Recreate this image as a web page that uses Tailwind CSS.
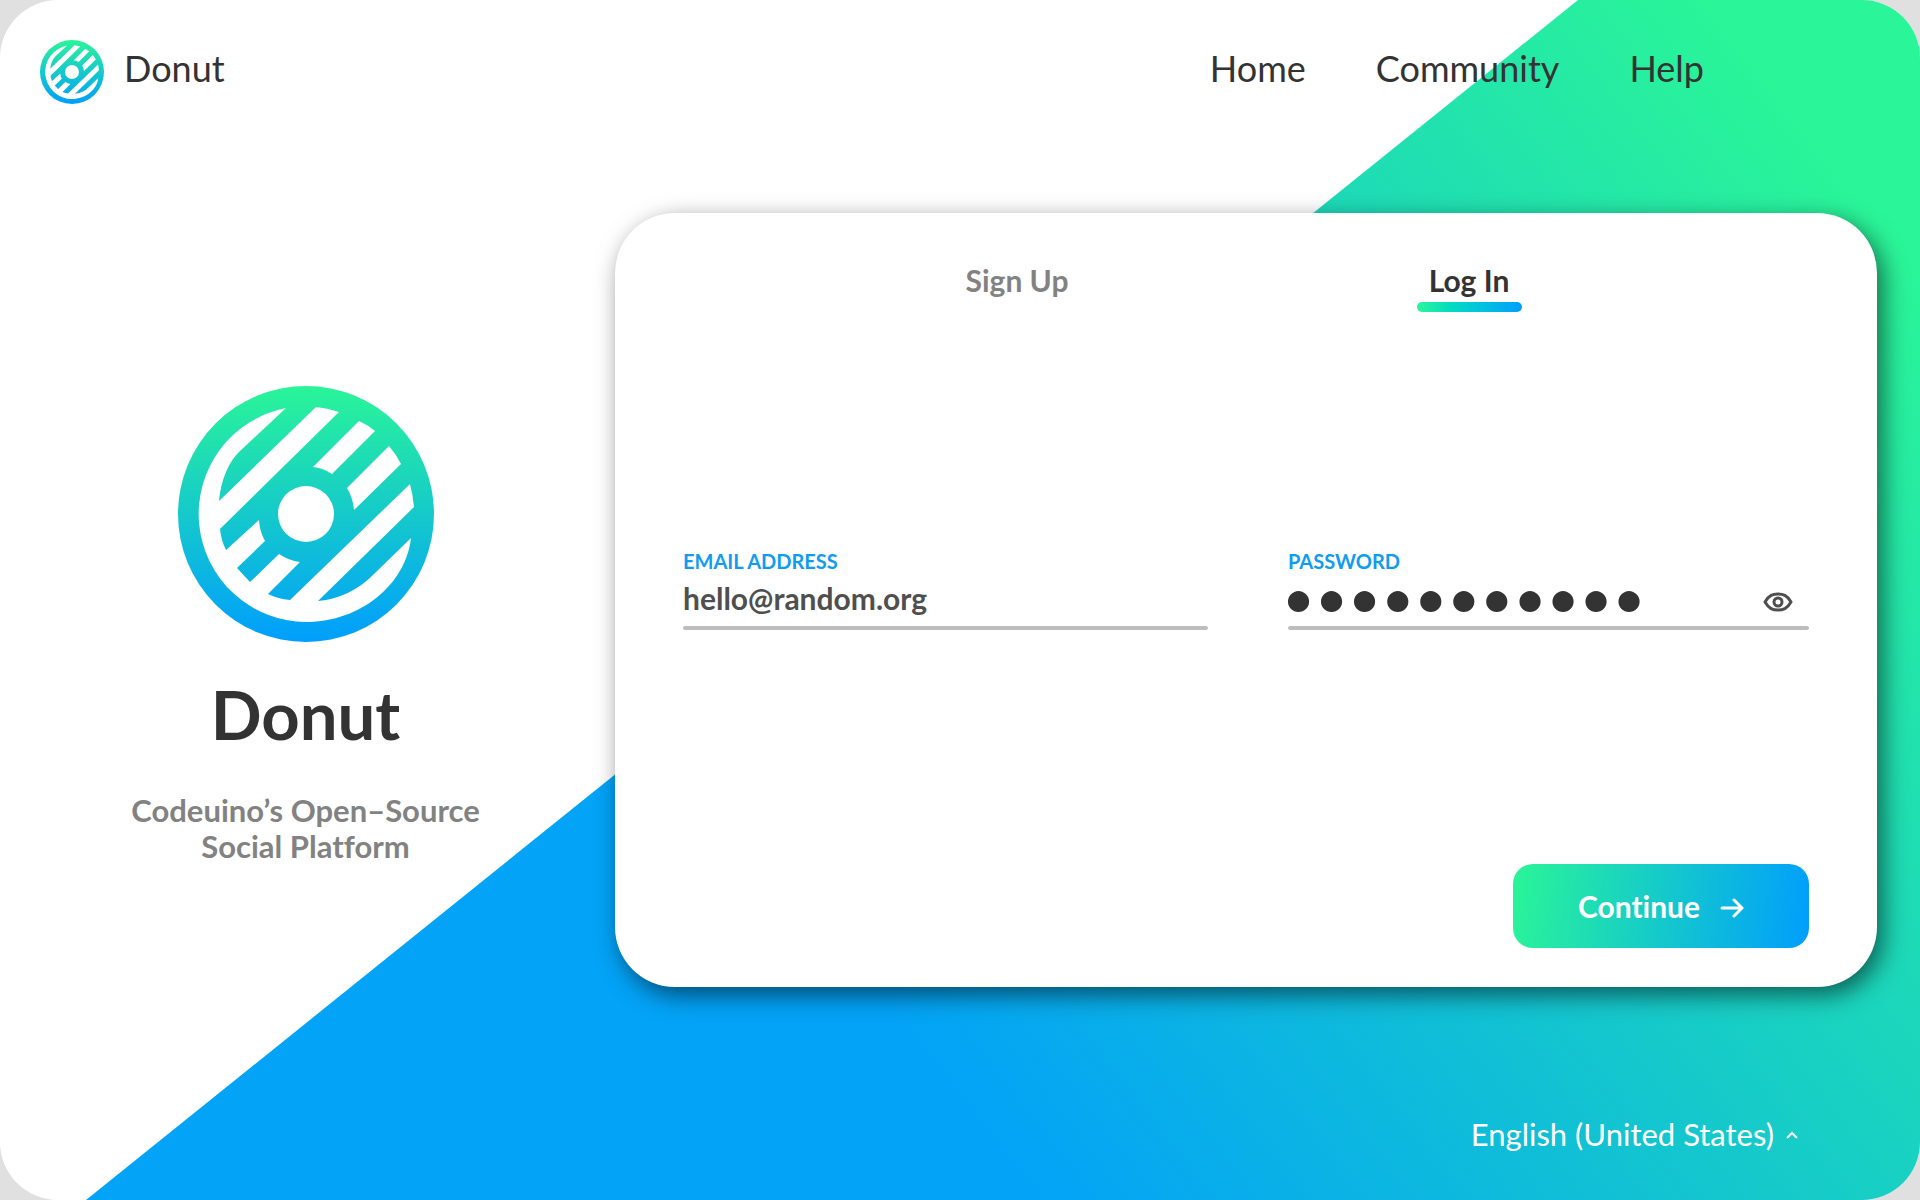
<!DOCTYPE html>
<html lang="en">
<head>
<meta charset="utf-8">
<meta name="viewport" content="width=device-width, initial-scale=1">
<title>Donut</title>
<script src="https://cdn.jsdelivr.net/npm/@tailwindcss/browser@4"></script>
</head>
<body class="min-h-screen bg-[#e0e0e0] font-['Lato',sans-serif] text-[#333333] [font-variant-ligatures:none]">
<svg class="absolute size-0" aria-hidden="true">
  <defs>
    <linearGradient id="brand" x1="0" y1="0" x2="0" y2="1">
      <stop offset="0" stop-color="#2af598"/>
      <stop offset="1" stop-color="#009efd"/>
    </linearGradient>
    <symbol id="donut-mark" viewBox="0 0 256 256">
      <circle cx="128" cy="128" r="128" fill="url(#brand)"/>
      <path fill="#fff" d="M108 22A108 108 0 0 0 128 236C183 236 228 198 233 152L196 188C180 204 162 213 140 215L236 121Q235 109 232 98L112 214Q100 213 90 208L122 176A48 48 0 0 1 101 168L72 196L59 182L87 155A48 48 0 0 1 81 134L48 164Q43 154 42 143L161 26Q149 22 138 21L41 115C43 93 51 76 61 66Z"/>
      <path fill="#fff" d="M135 81L181 35Q190 39 197 45L154 88Q145 82 135 81ZM169 102L211 60Q218 68 223 78L176 124Q175 112 169 102Z"/>
      <circle cx="128" cy="128" r="28" fill="#fff"/>
    </symbol>
  </defs>
</svg>

<div class="relative flex min-h-screen flex-col overflow-hidden rounded-[58px] bg-white">
  <svg class="absolute inset-0 size-full" viewBox="0 0 1920 1200" preserveAspectRatio="none" aria-hidden="true">
    <defs>
      <linearGradient id="slope" gradientUnits="userSpaceOnUse" x1="960" y1="1100" x2="1961" y2="326">
        <stop offset="0" stop-color="#03a3f7"/>
        <stop offset="1" stop-color="#2af598"/>
      </linearGradient>
    </defs>
    <path d="M86 1200L1578 0H1920V1200Z" fill="url(#slope)"/>
  </svg>

  <header class="relative flex items-start justify-between pt-10 pr-[216px] pl-10">
    <a href="#" class="flex items-start gap-5 text-[36px] leading-14">
      <svg class="size-16" aria-hidden="true"><use href="#donut-mark"/></svg>
      <span>Donut</span>
    </a>
    <nav class="flex gap-[70px] text-[36px] leading-14">
      <a href="#">Home</a>
      <a href="#">Community</a>
      <a href="#">Help</a>
    </nav>
  </header>

  <main class="relative mt-[109px] flex pr-[43px]">
    <section class="flex w-[615px] shrink-0 flex-col items-center pt-[173px] pr-1 text-center">
      <svg class="size-64" aria-hidden="true"><use href="#donut-mark"/></svg>
      <h1 class="mt-[30px] text-[67px] leading-[84px] font-bold">Donut</h1>
      <p class="mt-9 text-[31px] leading-9 font-bold text-[#828282]">Codeuino’s Open–Source<br>Social Platform</p>
    </section>

    <form class="flex h-[774px] flex-1 flex-col rounded-[60px] bg-white px-[68px] pb-[39px] shadow-[6px_8px_24px_rgba(0,0,0,0.55)]">
      <div class="flex justify-center gap-[347px] pt-[49px] pr-[6px] text-[30px] leading-[36px] font-bold" role="tablist">
        <button type="button" role="tab" aria-selected="false" class="flex w-[105px] justify-center whitespace-nowrap text-[#828282]">Sign Up</button>
        <button type="button" role="tab" aria-selected="true" class="flex w-[105px] flex-col items-center gap-1">
          <span>Log In</span>
          <span class="h-[10px] w-full rounded-full bg-linear-to-r from-[#2af598] to-[#009efd]"></span>
        </button>
      </div>

      <div class="mt-[237px] grid grid-cols-[525fr_521fr] gap-20">
        <div class="flex flex-col">
          <label for="email" class="text-[20px] leading-6 font-bold text-[#109cf1]">EMAIL ADDRESS</label>
          <input id="email" type="email" value="hello@random.org" class="h-[53px] w-full pb-1 text-[30px] font-bold text-[#4f4f4f] outline-none">
          <span class="h-1 rounded-full bg-[#bdbdbd]"></span>
        </div>
        <div class="flex flex-col">
          <label for="password" class="text-[20px] leading-6 font-bold text-[#109cf1]">PASSWORD</label>
          <div class="-ml-1.5 flex items-center pr-4">
            <input id="password" type="password" value="donutdonuts" class="h-[53px] w-full pb-1.5 text-[57px] outline-none">
            <button type="button" aria-label="Show password" class="pt-1">
              <svg class="h-7 w-8 fill-none stroke-[#4f4f4f] stroke-[3]" viewBox="0 0 32 28"><path d="M4 14C8 7 12 6 17 6S26 7 30 14C26 21 22 22 17 22S8 21 4 14Z" stroke-linejoin="round"/><circle cx="17" cy="14" r="4"/></svg>
            </button>
          </div>
          <span class="h-1 rounded-full bg-[#bdbdbd]"></span>
        </div>
      </div>

      <button type="submit" class="mt-auto flex h-[84px] w-[296px] items-center justify-center gap-5 self-end rounded-[20px] bg-linear-[97deg] from-[#2af598] to-[#009efd] text-[30px] font-bold text-white">
        <span>Continue</span>
        <svg class="h-6 w-6 fill-none stroke-white stroke-[3]" viewBox="0 0 24 24" stroke-linecap="round" stroke-linejoin="round"><path d="M2 14H22M14 6L22 14L14 22"/></svg>
      </button>
    </form>
  </main>

  <footer class="relative mt-auto flex justify-end pr-[122px] pb-12">
    <button type="button" class="flex items-center gap-3 text-[31px] leading-9 text-white">
      <span>English (United States)</span>
      <svg class="h-3 w-3 fill-none stroke-white stroke-2" viewBox="0 0 12 12"><path d="M1 10L6 5L11 10"/></svg>
    </button>
  </footer>
</div>
</body>
</html>
